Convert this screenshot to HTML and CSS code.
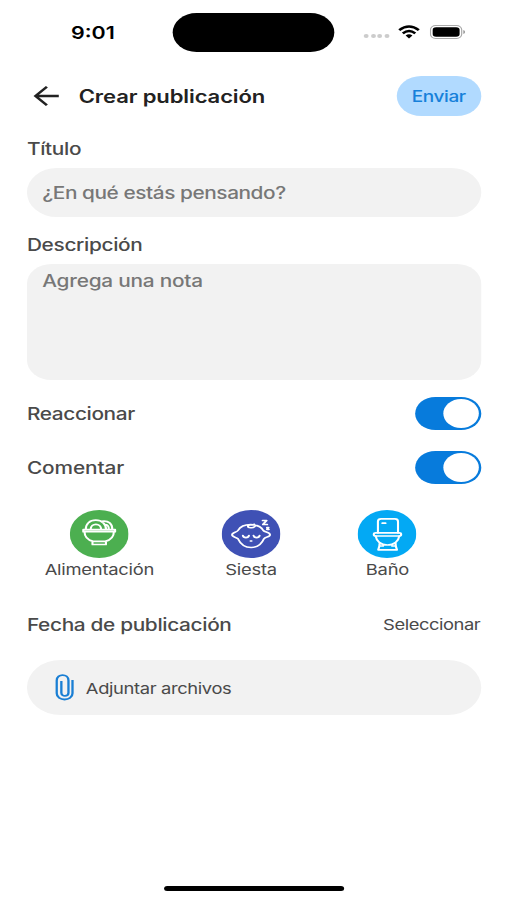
FILE: index.html
```html
<!DOCTYPE html>
<html lang="es">
<head>
<meta charset="utf-8">
<title>Crear publicación</title>
<link rel="stylesheet" href="styles.css">
</head>
<body>
<div class="screen">
  <div class="status">
    <span class="time">9:01</span>
    <div class="island"></div>
    <div class="dots"><i></i><i></i><i></i><i></i></div>
    <svg class="wifi" width="18" height="14" viewBox="0 0 18 14">
      <g fill="none" stroke="#000" stroke-width="2.3"><path d="M1 5.1Q9-2.1 17 5.1"/><path d="M3.9 8.3Q9 3.8 14.1 8.3"/></g>
      <path d="M6.2 10.4Q9 8 11.8 10.4L9 13.5Z"/>
    </svg>
    <svg class="battery" width="29" height="14" viewBox="0 0 29 14">
      <rect x=".5" y=".5" width="25.5" height="13" rx="4.2" fill="none" stroke="#aaa"/>
      <rect x="2.3" y="2.2" width="22" height="9.6" rx="2.8"/>
      <path d="M27.3 5Q28.8 5.5 28.8 7T27.3 9Z" fill="#999"/>
    </svg>
  </div>
  <header class="header">
    <svg class="back" width="22" height="22" viewBox="0 0 22 22" fill="none" stroke="#222" stroke-width="2.3"><path d="M21 11H2M11.3 1.7 2 11l9.3 9.3"/></svg>
    <h1>Crear publicación</h1>
    <button class="send">Enviar</button>
  </header>
  <form class="form">
    <label class="label title-label"><span>Título</span></label>
    <div class="field input"><span class="ask">¿En qué estás pensando?</span></div>
    <label class="label desc-label"><span>Descripción</span></label>
    <div class="field area"><span class="note">Agrega una nota</span></div>
    <div class="row"><span class="label react">Reaccionar</span><span class="toggle"><i></i></span></div>
    <div class="row"><span class="label comment">Comentar</span><span class="toggle"><i></i></span></div>
    <div class="types">
      <div class="type food">
        <svg width="48" height="48" viewBox="0 0 48 48">
          <circle cx="24" cy="24" r="24" fill="#4caf50"/>
          <g fill="none" stroke="#fff" stroke-width="1.7" stroke-linejoin="round" stroke-linecap="round">
            <path d="M11 19.7h26v2H11zM12 21.7c0 5 3 8.3 7 9.7h10c4-1.4 7-4.7 7-9.7M18.5 31.5h11v3h-11zM13 19.5c0-5.5 3.2-9.3 8.2-9.3 5.2 0 8.4 4 8.4 9.3M17 19.5c0-6.8 8.6-6.8 8.6 0M25.5 11.4c6.5-1.7 9.3 3 9.2 8.1M29 14.7c2.2 0 3 2.2 2.8 4.8"/>
          </g>
        </svg>
        <span>Alimentación</span>
      </div>
      <div class="type nap">
        <svg width="48" height="48" viewBox="0 0 48 48">
          <circle cx="24" cy="24" r="24" fill="#3f51b5"/>
          <g fill="none" stroke="#fff" stroke-width="1.6" stroke-linecap="round" stroke-linejoin="round">
            <path d="M34 20.5C30.5 12.7 17 12.7 13.3 20.5c-1 2-4.8 1.8-4.8 4.3s3.5 2 4.8 4c4.4 11.6 17.2 11.6 21.2 0 1-2.2 5-1.5 5-4 0-2.5-4.4-2.6-5.5-4.3M26.5 14.2c2 2-.2 3.8-2.8 3.5-3-.3-3-3 0-2.7"/>
            <path d="M17.3 25.5c.5 2.8 4.5 2.8 5 0M26 25.5c.5 2.8 4.5 2.8 5 0M23.5 31h1"/>
            <path d="M33.5 10.5h3.2l-3 4h3.5M37 17.5h1.3l-1.3 1.8h1.5" stroke-width="1.7"/>
          </g>
        </svg>
        <span>Siesta</span>
      </div>
      <div class="type bath">
        <svg width="48" height="48" viewBox="0 0 48 48">
          <circle cx="24" cy="24" r="24" fill="#03a9f4"/>
          <g fill="none" stroke="#fff" stroke-width="1.7" stroke-linejoin="round" stroke-linecap="round">
            <path d="M16.6 22.8V11.5q0-2.6 2.6-2.6h11.2q2.6 0 2.6 2.6v11.3M20.2 13.2h2.6"/>
            <rect x="13.2" y="22.8" width="22.4" height="3.2" rx="1.6"/>
            <path d="M14.8 26.2c.5 4.7 4 8.8 9.6 8.8s9.1-4.1 9.6-8.8M18 32.8c0 2.4-.1 4.5-1.2 7h15.4c-1.1-2.5-1.2-4.6-1.2-7M17.8 36h3M28.2 36h3"/>
          </g>
        </svg>
        <span>Baño</span>
      </div>
    </div>
    <div class="row date"><span class="label pubdate">Fecha de publicación</span><span class="select">Seleccionar</span></div>
    <div class="field attach">
      <svg width="16" height="27" viewBox="0 0 16 27" fill="none" stroke="#1a7fd4" stroke-width="1.9"><path d="M14.2 6v13.2c0 8.3-12.9 8.3-12.9 0V6.5c0-7.2 9.6-7.2 9.6 0v12.2c0 4.2-5.8 4.2-5.8 0V7"/></svg>
      <span class="attach-text">Adjuntar archivos</span>
    </div>
  </form>
  <div class="home"></div>
</div>
</body>
</html>
```
FILE: styles.css
```css
* { box-sizing: border-box; }
html, body { margin: 0; width: 507px; height: 900px; overflow: hidden; background: #fff; }
/* The 414px layout is widened to fill the 507px viewport. */
.screen {
  width: 414px; height: 900px; display: flex; flex-direction: column;
  transform: scaleX(1.22464); transform-origin: 0 0;
  font-family: Inter, "Liberation Sans", sans-serif; color: #4a4a4a; white-space: nowrap;
}
.status { height: 64px; flex: none; display: flex; align-items: center; padding-left: 58px; }
.time { width: 83.3px; font-size: 17.5px; font-weight: 600; color: #000; }
.island { width: 131.5px; height: 39px; border-radius: 20px; background: #000; margin-top: 1px; }
.dots { display: flex; gap: 1.8px; margin: 8px 0 0 24.4px; }
.dots i { width: 3.8px; height: 4px; border-radius: 50%; background: #ccc; }
.wifi { margin-left: 7.5px; }
.battery { margin-left: 7.6px; }
.header { height: 64px; flex: none; display: flex; align-items: center; padding: 0 21px 0 27px; }
.back { margin-right: 15.3px; }
h1 { margin: 0; font-size: 18px; font-weight: 600; color: #222; letter-spacing: -.1px; }
.send {
  margin-left: auto; width: 69.5px; height: 40px; border: 0; border-radius: 20px; padding: 0;
  background: #b1daff; color: #1680da; font: 500 15.5px Inter, sans-serif; letter-spacing: -.3px;
}
.form { display: flex; flex-direction: column; padding: 0 21px 0 22px; }
.label { font-size: 17px; line-height: 24px; font-weight: 500; letter-spacing: -.28px; }
.title-label { margin-top: 9px; }
.field { background: #f2f2f2; color: #777; font-size: 17px; line-height: 24px; font-weight: 500; }
.input { height: 49px; border-radius: 24.5px; margin: 6.5px 0 16.5px; padding: 13px 12.5px; letter-spacing: -.36px; }
.area { height: 116px; border-radius: 20px; margin: 7px 0 6px; padding: 5px 12.5px; letter-spacing: -.2px; }
.row { height: 54px; display: flex; align-items: center; justify-content: space-between; }
.row .label, .select { padding-top: 2px; }
.react { letter-spacing: -.31px; }
.comment { letter-spacing: -.1px; }
.toggle { width: 54px; height: 33px; border-radius: 17px; background: #077bdc; padding: 2px; display: flex; justify-content: flex-end; }
.toggle i { width: 29px; height: 29px; border-radius: 50%; background: #fff; }
.types { display: flex; margin: 15.5px 0 0 14.2px; height: 72px; }
.type { width: 90px; display: flex; flex-direction: column; align-items: center; font-size: 15px; line-height: 24px; letter-spacing: -.2px; }
.nap { margin-left: 33.8px; }
.bath { margin-left: 21.4px; }
.date { margin-top: 15px; }
.select { font-size: 15px; letter-spacing: -.37px; margin-right: .8px; }
.attach { height: 55px; border-radius: 27.5px; margin-top: 9px; display: flex; align-items: center; padding-left: 23px; gap: 9.1px; font-size: 15px; font-weight: 400; color: #4a4a4a; letter-spacing: -.31px; }
.attach-text { padding-top: 3px; }
.home { width: 147px; height: 5px; border-radius: 3px; background: #000; margin: auto 0 9px 134px; }
```
